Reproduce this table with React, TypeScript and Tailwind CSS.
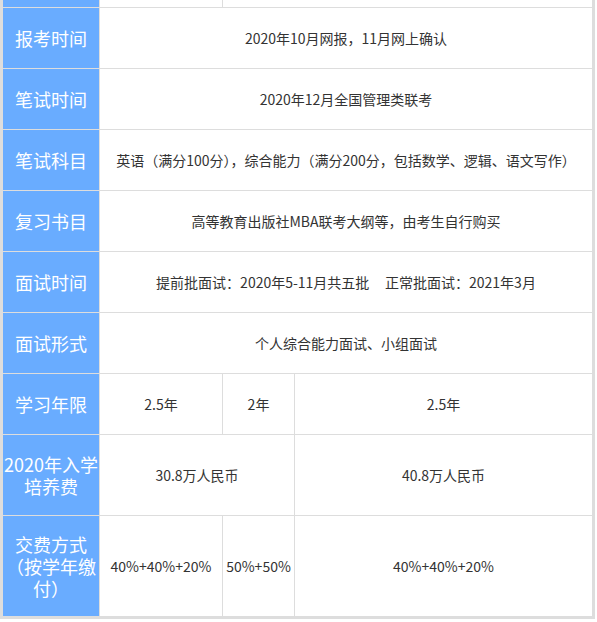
import { Fragment } from "react";

const head = "flex items-center justify-center bg-[#69acff] text-white text-[18px] leading-[22px] text-center";
const cell = "flex items-center justify-center bg-white text-[#333] text-[14px] text-center";

interface Row {
  label: string;
  text: string;
}

const singleRows: Row[] = [
  { label: "报考时间", text: "2020年10月网报，11月网上确认" },
  { label: "笔试时间", text: "2020年12月全国管理类联考" },
  { label: "笔试科目", text: "英语（满分100分），综合能力（满分200分，包括数学、逻辑、语文写作）" },
  { label: "复习书目", text: "高等教育出版社MBA联考大纲等，由考生自行购买" },
  { label: "面试时间", text: "提前批面试：2020年5-11月共五批\u00a0\u00a0\u00a0\u00a0\u00a0正常批面试：2021年3月" },
  { label: "面试形式", text: "个人综合能力面试、小组面试" },
];

export default function App() {
  return (
    <div className="w-[597px] h-[622px] bg-white" style={{ fontFamily: '"Noto Sans CJK SC", "Noto Sans", sans-serif' }}>
      <div className="w-[595px] grid grid-cols-[96px_122px_71px_297px] grid-rows-[7px_repeat(7,60px)_80px_100px] gap-px bg-[#dddddd] pl-[3px] pr-[3px] pb-[3px]">
        {/* partial row cut off at the top */}
        <div className="bg-[#69acff]" />
        <div className="bg-white" />
        <div className="bg-white col-span-2" />

        {singleRows.map((r) => (
          <Fragment key={r.label}>
            <div className={head}>{r.label}</div>
            <div className={`${cell} col-span-3`}>{r.text}</div>
          </Fragment>
        ))}

        <div className={head}>学习年限</div>
        <div className={cell}>2.5年</div>
        <div className={cell}>2年</div>
        <div className={cell}>2.5年</div>

        <div className={head}>2020年入学<br />培养费</div>
        <div className={`${cell} col-span-2`}>30.8万人民币</div>
        <div className={cell}>40.8万人民币</div>

        <div className={head}>
          <span>交费方式<br />（按学年缴<br />付）</span>
        </div>
        <div className={cell}>40%+40%+20%</div>
        <div className={cell}>50%+50%</div>
        <div className={cell}>40%+40%+20%</div>
      </div>
    </div>
  );
}
